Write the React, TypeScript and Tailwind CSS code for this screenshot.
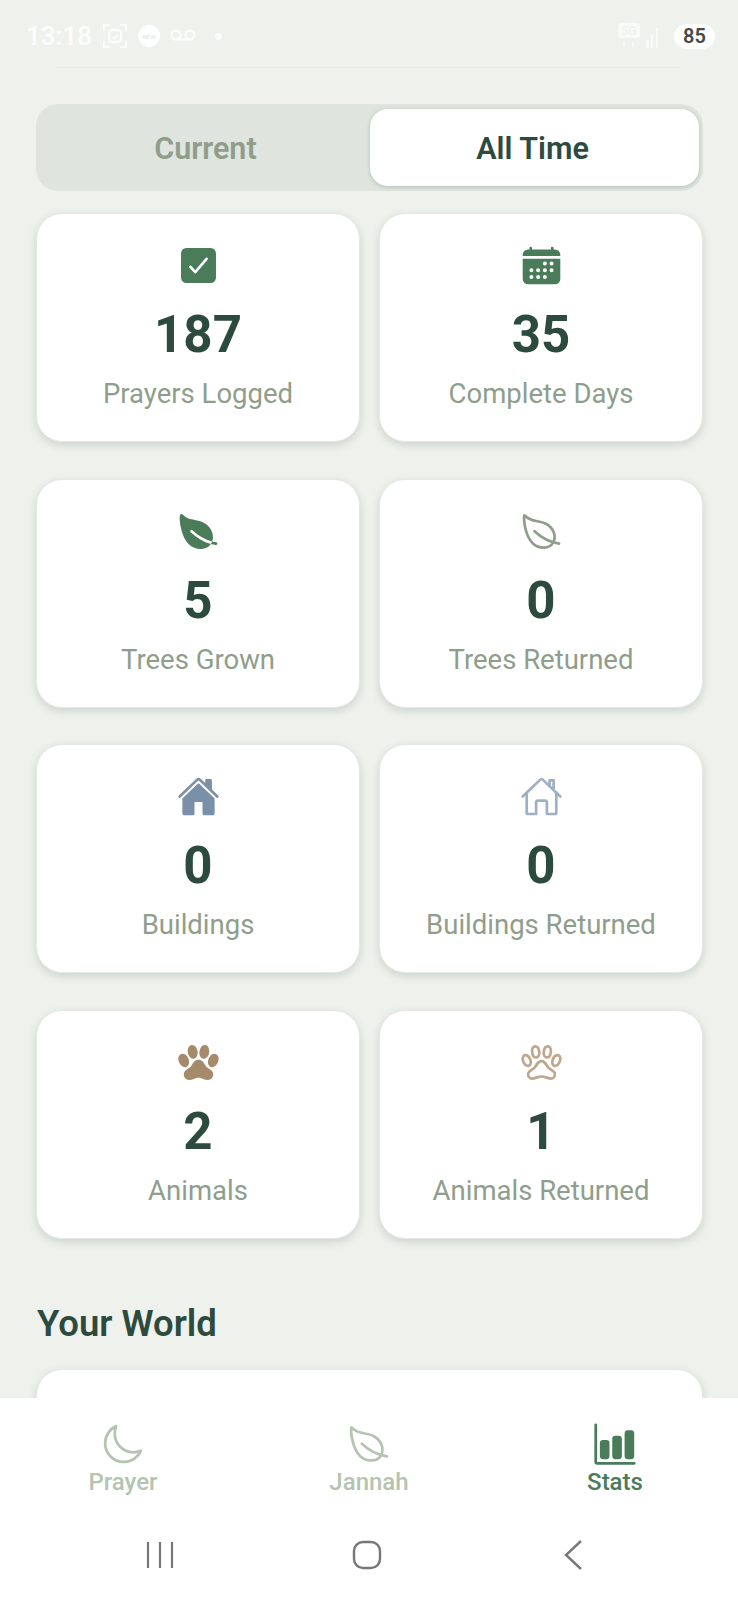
import type { ReactNode } from 'react';
import {
  IoBarChart,
  IoCalendar,
  IoCheckbox,
  IoHome,
  IoHomeOutline,
  IoLeaf,
  IoLeafOutline,
  IoMoonOutline,
  IoPaw,
  IoPawOutline,
} from 'react-icons/io5';

const STATS: { icon: ReactNode; value: string; label: string }[] = [
  { icon: <IoCheckbox size={43} className="text-[#4a7c59]" />, value: '187', label: 'Prayers Logged' },
  { icon: <IoCalendar size={43} className="text-[#4a7c59]" />, value: '35', label: 'Complete Days' },
  { icon: <IoLeaf size={43} className="text-[#4a7c59]" />, value: '5', label: 'Trees Grown' },
  { icon: <IoLeafOutline size={43} className="text-[#8f9e8b]" />, value: '0', label: 'Trees Returned' },
  { icon: <IoHome size={43} className="text-[#7a8fa8]" />, value: '0', label: 'Buildings' },
  { icon: <IoHomeOutline size={43} className="text-[#9fb0c2]" />, value: '0', label: 'Buildings Returned' },
  { icon: <IoPaw size={43} className="text-[#a68a6c]" />, value: '2', label: 'Animals' },
  { icon: <IoPawOutline size={43} className="text-[#bfa78f]" />, value: '1', label: 'Animals Returned' },
];

function StatCard({ icon, value, label }: { icon: ReactNode; value: string; label: string }) {
  return (
    <div className="h-[229px] rounded-[26px] bg-white border border-[#e6e9e3] shadow-[0_3px_8px_rgba(45,74,62,0.18)] flex flex-col items-center pt-[30px]">
      <div className="h-[43px] flex items-center justify-center">{icon}</div>
      <div className="mt-[18px] text-[51px] leading-[60px] font-bold text-[#2d4a3e]">{value}</div>
      <div className="mt-[13px] text-[27.5px] leading-[32px] text-[#8f9e8b]">{label}</div>
    </div>
  );
}

function StatusBar() {
  return (
    <div className="h-[68px] shrink-0 relative">
      <div className="flex items-center justify-between pl-[26px] pr-[23px] pt-[22px]">
        <div className="flex items-center gap-[10px] text-white/80">
          <span className="text-[26px] leading-[25px] font-medium">13:18</span>
          <svg width="26" height="26" viewBox="0 0 26 26" fill="none" stroke="currentColor" strokeWidth="2">
            <path d="M2 8V2h6M18 2h6v6M24 18v6h-6M8 24H2v-6" />
            <rect x="7" y="7" width="12" height="12" rx="3" />
            <path d="M10 14l2 2 4-4" strokeWidth="1.4" />
          </svg>
          <span className="w-[22px] h-[22px] rounded-full bg-white/90 flex items-center justify-center text-[6px] text-[#dfe3dc]">
            NEW
          </span>
          <svg width="26" height="14" viewBox="0 0 26 14" fill="none" stroke="currentColor" strokeWidth="2.4">
            <circle cx="6" cy="6" r="4.5" />
            <circle cx="20" cy="6" r="4.5" />
            <path d="M6 10.5h14" />
          </svg>
          <span className="ml-[9px] w-[7px] h-[7px] rounded-full bg-white/80" />
        </div>
        <div className="flex items-center gap-[10px]">
          <svg width="46" height="28" viewBox="0 0 46 28" fill="none">
            <rect x="0" y="1" width="22" height="15" rx="3" fill="#ffffff" fillOpacity="0.6" />
            <text x="11" y="13" textAnchor="middle" fontSize="12" fontWeight="600" fill="#eff2ec">
              5G
            </text>
            <rect x="5" y="20" width="2" height="5" fill="#ffffff" fillOpacity="0.5" />
            <rect x="14" y="20" width="2" height="5" fill="#ffffff" fillOpacity="0.5" />
            <rect x="28" y="18" width="3" height="8" fill="#ffffff" fillOpacity="0.7" />
            <rect x="33" y="12" width="2" height="14" fill="#ffffff" fillOpacity="0.7" />
            <rect x="38" y="6" width="2" height="20" fill="#ffffff" fillOpacity="0.5" />
          </svg>
          <div className="w-[41px] h-[25px] rounded-full bg-white flex items-center justify-center text-[20px] font-semibold text-[#484848]">
            85
          </div>
        </div>
      </div>
      <div className="absolute left-[57px] right-[58px] bottom-0 h-px bg-[#e9ece6]" />
    </div>
  );
}

function NavItem({ icon, label, active }: { icon: ReactNode; label: string; active?: boolean }) {
  return (
    <div className="flex flex-col items-center">
      <div className="h-[42px] flex items-center justify-center">{icon}</div>
      <span className={`mt-[3px] text-[24px] leading-[28px] font-medium ${active ? 'text-[#4a7c59]' : 'text-[#b5c4b1]'}`}>
        {label}
      </span>
    </div>
  );
}

export default function App() {
  return (
    <div className="w-[738px] h-[1600px] flex flex-col overflow-hidden bg-[#eff2ec] font-['Roboto',sans-serif]">
      <div className="flex-1 min-h-0 overflow-hidden">
        <StatusBar />
        <div className="pl-[36px] pr-[35px] pt-[36px]">
          {/* Period toggle */}
          <div className="h-[87px] rounded-[22px] bg-[#dfe5de] p-[5px] pr-[4px] grid grid-cols-2">
            <div className="pt-[3px] flex items-center justify-center text-[30.5px] font-semibold text-[#8f9e8b]">Current</div>
            <div className="pt-[3px] pr-[4px] flex items-center justify-center rounded-[18px] bg-white text-[30.5px] font-semibold text-[#2d4a3e] shadow-[0_1px_4px_rgba(45,74,62,0.25)]">
              All Time
            </div>
          </div>

          <div className="mt-[22px] grid grid-cols-2 gap-x-[19px] gap-y-[36.5px]">
            {STATS.map((stat) => (
              <StatCard key={stat.label} {...stat} />
            ))}
          </div>

          <h2 className="mt-[65px] pl-px text-[36.5px] leading-[40px] font-semibold text-[#2d4a3e]">Your World</h2>
          <div className="mt-[25px] h-[200px] rounded-[26px] bg-white border border-[#e6e9e3] shadow-[0_3px_8px_rgba(45,74,62,0.18)]" />
        </div>
      </div>

      {/* Bottom tabs */}
      <div className="h-[202px] shrink-0 bg-white">
        <div className="grid grid-cols-3 pt-[25px]">
          <NavItem icon={<IoMoonOutline size={44} className="text-[#b5c4b1]" />} label="Prayer" />
          <NavItem icon={<IoLeafOutline size={44} className="text-[#b5c4b1]" />} label="Jannah" />
          <NavItem icon={<IoBarChart size={44} className="text-[#4a7c59]" />} label="Stats" active />
        </div>
        {/* Android buttons */}
        <div className="mt-[44px] flex items-center justify-between pl-[146px] pr-[155px]">
          <svg width="28" height="28" viewBox="0 0 28 28" stroke="#777777" strokeWidth="2.2">
            <path d="M2 1v26M14 1v26M26 1v26" />
          </svg>
          <svg className="-ml-[4px]" width="30" height="30" viewBox="0 0 30 30" fill="none" stroke="#777777" strokeWidth="2.4">
            <rect x="2" y="2" width="26" height="26" rx="9" />
          </svg>
          <svg width="20" height="30" viewBox="0 0 20 30" fill="none" stroke="#777777" strokeWidth="2.4">
            <path d="M18 1L3 15l15 14" />
          </svg>
        </div>
      </div>
    </div>
  );
}
